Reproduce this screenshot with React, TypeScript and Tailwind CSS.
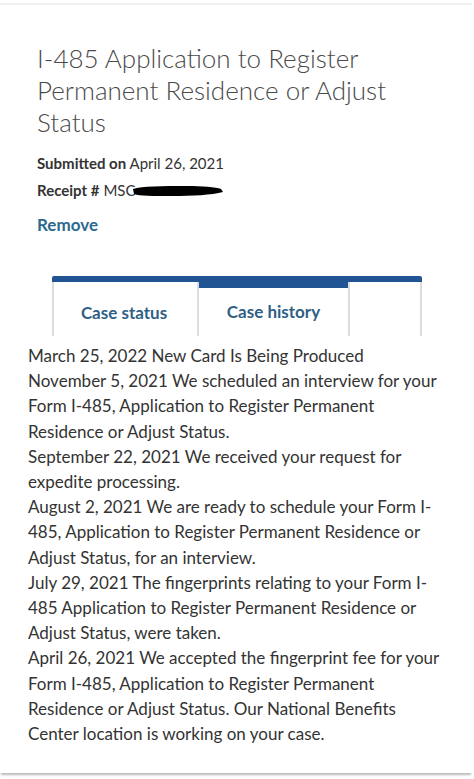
const history = [
  ['March 25, 2022 New Card Is Being Produced'],
  [
    'November 5, 2021 We scheduled an interview for your',
    'Form I-485, Application to Register Permanent',
    'Residence or Adjust Status.',
  ],
  ['September 22, 2021 We received your request for', 'expedite processing.'],
  [
    'August 2, 2021 We are ready to schedule your Form I-',
    '485, Application to Register Permanent Residence or',
    'Adjust Status, for an interview.',
  ],
  [
    'July 29, 2021 The fingerprints relating to your Form I-',
    '485 Application to Register Permanent Residence or',
    'Adjust Status, were taken.',
  ],
  [
    'April 26, 2021 We accepted the fingerprint fee for your',
    'Form I-485, Application to Register Permanent',
    'Residence or Adjust Status. Our National Benefits',
    'Center location is working on your case.',
  ],
]

export default function App() {
  return (
    <div className="w-[474px] h-[779px] bg-white overflow-hidden font-['Lato',sans-serif]">
      <div className="mt-[3px] w-[472px] h-[770px] border-t-2 border-[#f0f0f0] shadow-[0_3px_2px_-1px_rgba(0,0,0,0.28)]">
        {/* header */}
        <div className="pl-[37px] pt-[37px]">
          <h1 className="text-[26px] leading-[32px] font-light text-[#4a4a4a] w-[380px]">
            I-485 Application to Register Permanent Residence or Adjust Status
          </h1>
          <div className="mt-[12px] text-[15px] leading-[27px] text-[#333]">
            <div>
              <span className="font-bold">Submitted on</span> April 26, 2021
            </div>
            <div className="flex items-center">
              <span className="font-bold">Receipt #</span>
              <span className="ml-1">MSC</span>
              <svg width="92" height="14" viewBox="0 0 92 14" className="-ml-[4px] mt-[1px]">
                <path
                  d="M1 5 C10 2 30 2 55 2 C70 2 84 3 89 5 L91 8 C80 11 60 12 40 12 C20 12 8 12 2 10 Z"
                  fill="#000"
                />
              </svg>
            </div>
          </div>
          <div className="mt-[9px] text-[17px] leading-[24px] font-bold text-[#2c6a8e]">
            Remove
          </div>
        </div>

        {/* tabs */}
        <div className="mt-[39px] ml-[52px] w-[370px]">
          <div className="h-[6px] bg-[#205493] rounded-t-[2px]" />
          <div className="flex h-[54px] text-[17px] font-bold text-[#2f5f86]">
            <div className="w-[145px] border-l-2 border-[#dcdcdc] flex items-center justify-center pt-[7px] pr-[3px]">
              Case status
            </div>
            <div className="w-[151px] border-l-2 border-[#dcdcdc] flex flex-col">
              <div className="h-[6px] bg-[#205493]" />
              <div className="flex-1 flex items-center justify-center">Case history</div>
            </div>
            <div className="flex-1 border-l-2 border-r-2 border-[#dcdcdc]" />
          </div>
        </div>

        {/* history */}
        <div className="mt-[7px] pl-[28px] text-[17px] leading-[25.2px] text-[#333] whitespace-nowrap">
          {history.map((lines, i) => (
            <p key={i}>
              {lines.map((l, j) => (
                <span key={j} className="block">
                  {l}
                </span>
              ))}
            </p>
          ))}
        </div>
      </div>
    </div>
  )
}
